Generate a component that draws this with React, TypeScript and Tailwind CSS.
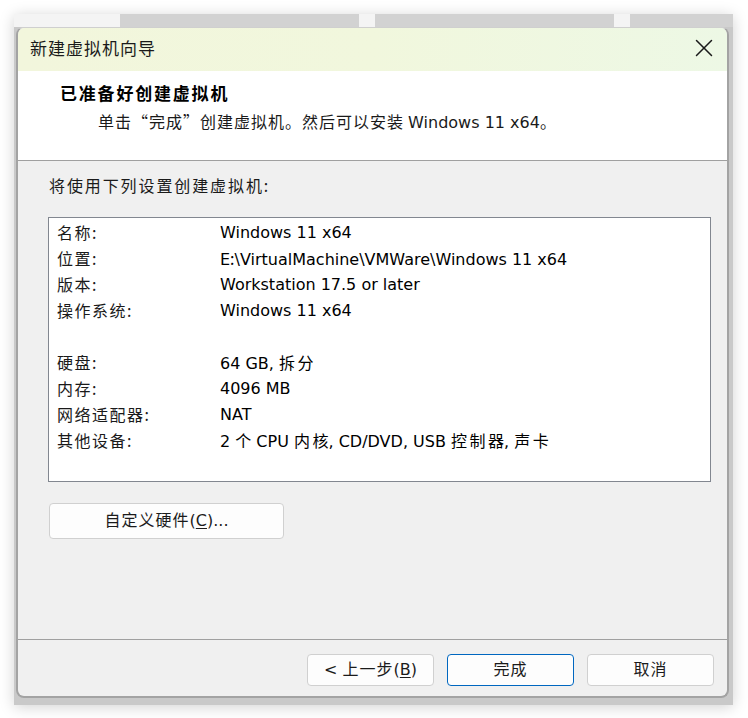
import { X } from 'lucide-react'

const ROWS: [string, string][] = [
  ['名称:', 'Windows 11 x64'],
  ['位置:', 'E:\\VirtualMachine\\VMWare\\Windows 11 x64'],
  ['版本:', 'Workstation 17.5 or later'],
  ['操作系统:', 'Windows 11 x64'],
  ['', ''],
  ['硬盘:', '64 GB, 拆分'],
  ['内存:', '4096 MB'],
  ['网络适配器:', 'NAT'],
  ['其他设备:', '2 个 CPU 内核, CD/DVD, USB 控制器, 声卡'],
]

const body = "font-['DejaVu_Sans','Noto_Sans_CJK_SC',sans-serif]"

// CJK runs get a little spacing, like the old bitmap font in the dialog
function T({ s, wide = 'tracking-[1.5px]' }: { s: string; wide?: string }) {
  const parts = s.split(/([\u3000-\u9fff\uff00-\uffef“”:]+)/)
  return (
    <>
      {parts.map((p, i) =>
        i % 2 === 1 ? (
          <span key={i} className="font-['Noto_Sans_CJK_SC',sans-serif]">
            <span className={wide}>{p.slice(0, -1)}</span>
            {p.slice(-1)}
          </span>
        ) : (
          p
        ),
      )}
    </>
  )
}

function WinButton({ children, primary, className = '' }: { children: React.ReactNode; primary?: boolean; className?: string }) {
  return (
    <button
      className={`flex items-center justify-center rounded-[4px] bg-[#fdfdfd] text-[16px] text-[#1b1b1b] ${body} ${
        primary ? 'border border-[#0067c0]' : 'border border-[#d0d0d0]'
      } ${className}`}
    >
      <span>{children}</span>
    </button>
  )
}

export default function App() {
  return (
    <div className="h-[718px] w-[748px] bg-white pl-[14px] pt-[14px] font-['Noto_Sans_CJK_SC',sans-serif]">
      <div className="w-[719px] shadow-[0_2px_14px_rgba(0,0,0,0.18)]">
        {/* Tabs of the window behind */}
        <div className="flex h-[13px] bg-[#f4f4f4]">
          <div className="w-[106px]" />
          <div className="w-[239px] bg-[#d2d2d2]" />
          <div className="w-[16px]" />
          <div className="w-[239px] bg-[#d2d2d2]" />
          <div className="w-[16px]" />
          <div className="flex-1 bg-[#d2d2d2]" />
        </div>

        <div className="bg-[#c9c9c9] pb-[7px] pl-[2px] pr-[4px]">
          {/* Dialog */}
          <div className="flex h-[671px] flex-col overflow-hidden rounded-[8px] border-2 border-t border-[#a3a3a3] border-t-[#cfcfcf] bg-[#f0f0f0]">
            {/* Title bar */}
            <div className="flex h-[43px] shrink-0 items-center justify-between bg-gradient-to-r from-[#f2f6dc] via-[#f1f7dd] to-[#edf8e5] pb-[3px] pl-[12px] pr-[8px]">
              <span className="text-[17px] tracking-[1px] text-[#1a1a1a]">新建虚拟机向导</span>
              <X size={30} strokeWidth={1.2} className="text-[#1a1a1a]" />
            </div>

            {/* Header */}
            <div className="h-[90px] shrink-0 border-b border-[#a0a0a0] bg-white">
              <div className="pl-[42px] pt-[11px] text-[17px] font-bold leading-[22px] tracking-[1.8px] text-black">已准备好创建虚拟机</div>
              <div className={`pl-[80px] pt-[6px] text-[16px] leading-[22px] text-[#1a1a1a] ${body}`}>
                <T s="单击“完成”创建虚拟机。然后可以安装 Windows 11 x64。" wide="tracking-[1px]" />
              </div>
            </div>

            {/* Body */}
            <div className={`flex-1 px-[30px] pt-[13px] ${body}`}>
              <div className="pl-[1px] text-[16px] leading-[22px] text-[#1a1a1a]">
                <T s="将使用下列设置创建虚拟机:" wide="tracking-[1.9px]" />
              </div>
              <div className="mt-[19px] h-[265px] w-[663px] border border-[#828790] bg-white pl-[8px] pt-[2px]">
                {ROWS.map(([label, value], i) => (
                  <div key={i} className="flex h-[26px] items-center text-[16px] text-black">
                    <span className="w-[163px] text-[#1a1a1a]">
                      <T s={label} />
                    </span>
                    <span>
                      <T s={value} wide="tracking-[2.5px]" />
                    </span>
                  </div>
                ))}
              </div>
              <WinButton className="mt-[21px] ml-[1px] h-[36px] w-[235px]">
                <span className="tracking-[1px]">自定义硬件</span>(<span className="underline underline-offset-2">C</span>)...
              </WinButton>
            </div>

            {/* Footer */}
            <div className="flex h-[57px] shrink-0 justify-end gap-[13px] border-t border-[#a0a0a0] pr-[13px] pt-[14px]">
              <WinButton className="h-[32px] w-[127px]">
                &lt; <span className="tracking-[1px]">上一步</span>(<span className="underline underline-offset-2">B</span>)
              </WinButton>
              <WinButton primary className="h-[32px] w-[127px]">
                <span className="tracking-[1px]">完成</span>
              </WinButton>
              <WinButton className="h-[32px] w-[127px]">
                <span className="tracking-[1px]">取消</span>
              </WinButton>
            </div>
          </div>
        </div>
      </div>
    </div>
  )
}
